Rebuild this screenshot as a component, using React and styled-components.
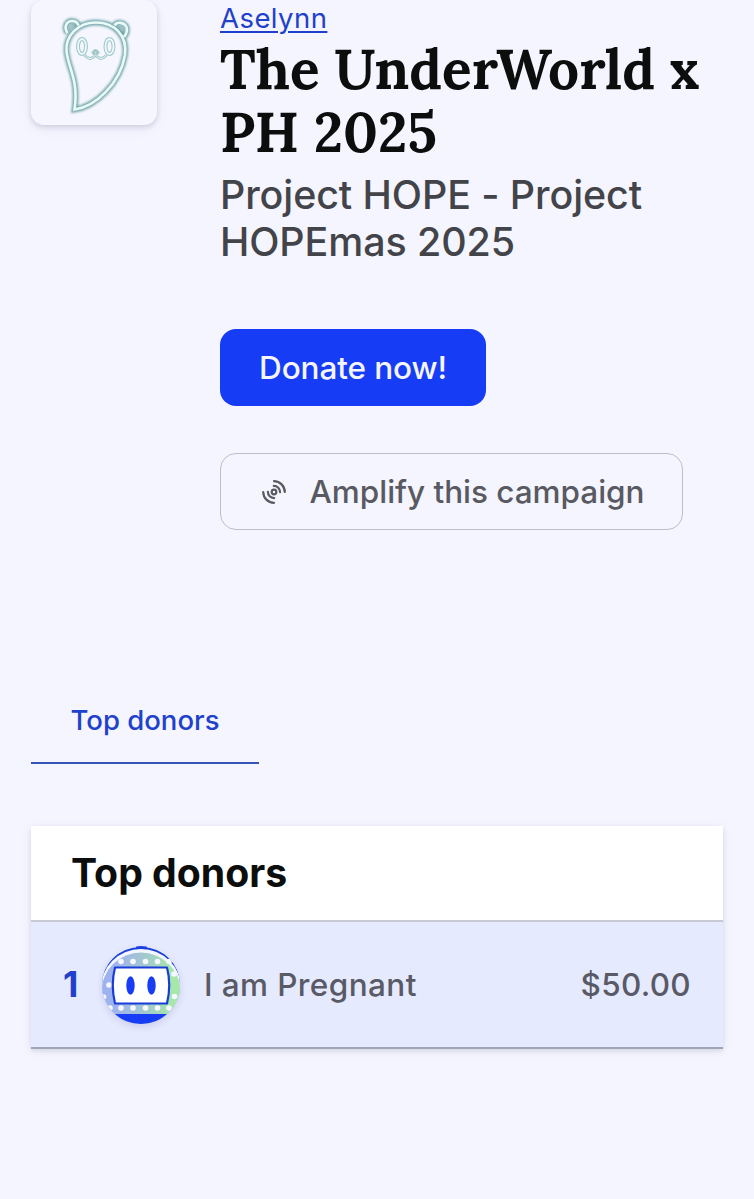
import React from "react";
import styled, { createGlobalStyle } from "styled-components";

const GlobalStyle = createGlobalStyle`
  * {
    box-sizing: border-box;
  }
  body {
    margin: 0;
    background-color: #f4f5ff;
    font-family: Inter, "Liberation Sans", sans-serif;
    -webkit-font-smoothing: antialiased;
  }
  h1, h2, p {
    margin: 0;
  }
`;

const StyledPage = styled.main`
  min-height: 1199px;
  padding: 0 31px;
  overflow: hidden;
`;

const StyledHero = styled.section`
  display: flex;
  align-items: flex-start;
  gap: 63px;
`;

const StyledAvatarCard = styled.div`
  flex: none;
  width: 126px;
  height: 125px;
  border-radius: 13px;
  background-color: #f5f6ff;
  box-shadow: 0 2px 5px rgba(40, 40, 70, 0.16), 0 4px 14px rgba(40, 40, 70, 0.05);
  svg {
    display: block;
  }
`;

const StyledDetails = styled.div`
  width: 503px;
`;

const StyledAuthor = styled.a`
  display: block;
  height: 38px;
  font-size: 27.5px;
  line-height: 37px;
  letter-spacing: 0.45px;
  color: #1f40cb;
  text-decoration: underline;
  text-decoration-thickness: 2px;
  text-underline-offset: 3px;
`;

const StyledTitle = styled.h1`
  font-family: Lora, "Liberation Serif", serif;
  font-size: 55px;
  line-height: 63px;
  font-weight: 700;
  color: #0c0d0d;
`;

const StyledSubtitle = styled.p`
  margin-top: 8px;
  font-size: 39.4px;
  font-weight: 500;
  line-height: 47.3px;
  letter-spacing: -0.08px;
  color: #434449;
`;

const StyledActions = styled.div`
  display: flex;
  flex-direction: column;
  align-items: flex-start;
  gap: 47px;
  margin-top: 62px;
`;

const StyledButton = styled.button`
  display: flex;
  align-items: center;
  justify-content: center;
  width: ${(props) => props.$width}px;
  height: 77px;
  padding: 0;
  border: ${(props) => (props.$outlined ? "1.5px solid #bdbec8" : "none")};
  border-radius: 16px;
  background-color: ${(props) => (props.$outlined ? "transparent" : "#163df5")};
  color: ${(props) => (props.$outlined ? "#595a61" : "#f4f5ff")};
  font-family: inherit;
  font-size: 31.5px;
  font-weight: 500;
  letter-spacing: ${(props) => props.$spacing}px;
  white-space: nowrap;
  svg {
    flex: none;
    margin: 1px 23px 0 2px;
  }
`;

const StyledTabs = styled.nav`
  display: flex;
  margin-top: 148px;
`;

const StyledTab = styled.a`
  width: 228px;
  height: 86px;
  border-bottom: 2px solid #3455b5;
  font-size: 27.5px;
  font-weight: 500;
  line-height: 84px;
  text-align: center;
  color: #2041cc;
`;

const StyledBoard = styled.section`
  margin-top: 62px;
  width: 692px;
  background-color: #ffffff;
  box-shadow: 0 2px 4px rgba(40, 40, 70, 0.1), 0 2px 12px rgba(40, 40, 70, 0.06);
`;

const StyledBoardTitle = styled.h2`
  height: 94px;
  padding-left: 40px;
  font-size: 39.2px;
  font-weight: 700;
  line-height: 94px;
  color: #0c0d0d;
`;

const StyledDonor = styled.div`
  display: flex;
  align-items: center;
  height: 129px;
  padding: 1px 32px 0;
  border-top: 2px solid #c6c8d2;
  border-bottom: 2px solid #9fa5b8;
  background-color: #e5eafe;
  font-size: 31.5px;
  font-weight: 500;
  color: #595a65;
`;

const StyledRank = styled.span`
  width: 39px;
  font-size: 35.5px;
  font-weight: 700;
  color: #2041cc;
`;

const StyledDonorAvatar = styled.div`
  flex: none;
  width: 78px;
  height: 78px;
  margin-right: 24px;
  border-radius: 50%;
  box-shadow: 0 3px 7px rgba(40, 50, 110, 0.14);
  svg {
    display: block;
  }
`;

const StyledDonorName = styled.span`
  flex: 1;
  letter-spacing: 0.4px;
`;

const StyledAmount = styled.span`
  letter-spacing: 0.3px;
`;

const ghostPaths = (
  <>
    <path d="M36.500 33C32.500 27 35.500 21 41 21Q46 21 47.500 25.500M83.500 25.500C86 21.500 93 22 95.500 27Q97 32 93 37" />
    <path d="M65 22.500C46.500 22.500 34.500 36 35.500 51C37 68 48 80 43.500 109.500C64 107 89 84 94 55C96.500 36 84 22.500 65 22.500Z" />
  </>
);

const GhostLogo = () => (
  <svg width="126" height="125" viewBox="0 0 126 125" fill="none">
    <defs>
      <filter id="glow" x="-20%" y="-20%" width="140%" height="140%">
        <feGaussianBlur stdDeviation="1.100" />
      </filter>
    </defs>
    <path d="M38 31Q37 24 42 24Q45 24 45 26ZM86 27Q92 24 93 30Q93 34 91 35Z" fill="#a9cbcd" />
    <g stroke="#669c9f" strokeWidth="6" opacity="0.850" filter="url(#glow)">
      {ghostPaths}
    </g>
    <g stroke="#e9fbf9" strokeWidth="2.600">
      {ghostPaths}
    </g>
    <g stroke="#a3c8cc" strokeWidth="4">
      <ellipse cx="51" cy="46.500" rx="4" ry="7.500" />
      <ellipse cx="78.500" cy="46.500" rx="4" ry="7.500" />
      <path d="M53.500 55Q59 62 64.500 55Q70 62 75.500 55M62 52.500Q64.500 48.500 67 52.500L64.500 55Z" strokeWidth="2.800" />
    </g>
    <g stroke="#ecfaf9" strokeWidth="1.800">
      <ellipse cx="51" cy="46.500" rx="4" ry="7.500" />
      <ellipse cx="78.500" cy="46.500" rx="4" ry="7.500" />
      <path d="M53.500 55Q59 62 64.500 55Q70 62 75.500 55" strokeWidth="1" />
    </g>
  </svg>
);

const AmplifyIcon = () => (
  <svg
    width="26"
    height="26"
    viewBox="0 0 26 26"
    fill="none"
    stroke="#595a61"
    strokeWidth="2.200"
    strokeLinecap="round"
  >
    <circle cx="13" cy="13" r="2.300" />
    <path d="M12.800 6.900A6.200 6.200 0 0 1 19.100 13.200" />
    <path d="M13 2.200A10.900 10.900 0 0 1 23.800 13" />
    <path d="M6.900 12.800A6.200 6.200 0 0 0 13.200 19.100" />
    <path d="M2.200 13A10.900 10.900 0 0 0 13 23.800" />
  </svg>
);

const dots = [
  [19, 15.5], [31, 15.5], [43.5, 15.5], [55.5, 15.5], [67, 15.5],
  [7, 39], [72, 28], [72.5, 50.5], [8, 62], [1.5, 51],
  [19, 62], [31, 62], [43.5, 62], [55.5, 62], [67, 62],
];

const RobotAvatar = () => (
  <svg width="78" height="78" viewBox="0 0 78 78">
    <defs>
      <linearGradient id="face" x1="0" x2="1">
        <stop offset="0.150" stopColor="#9fb2f0" />
        <stop offset="0.550" stopColor="#a3c8cf" />
        <stop offset="0.900" stopColor="#a6e8a8" />
      </linearGradient>
      <clipPath id="round">
        <circle cx="39" cy="39" r="39" />
      </clipPath>
    </defs>
    <g clipPath="url(#round)">
      <rect width="78" height="78" fill="#e9edff" />
      <circle cx="39" cy="42" r="41" fill="#1a3fdc" />
      <circle cx="39" cy="43.500" r="40.500" fill="#f4f6ff" />
      <circle cx="39" cy="46" r="39.500" fill="url(#face)" />
      <rect x="34" y="0" width="11" height="3" rx="1" fill="#1a3fdc" />
      {dots.map(([cx, cy]) => (
        <circle key={`${cx}-${cy}`} cx={cx} cy={cy} r="2.800" fill="#f6f8ff" />
      ))}
      <path
        d="M13 21.500H65Q69.500 39 65 57.500H13Q8.500 39 13 21.500Z"
        fill="#ffffff"
        stroke="#183cd8"
        strokeWidth="2.200"
        strokeLinejoin="round"
      />
      <ellipse cx="28.500" cy="39.500" rx="4.200" ry="9.200" fill="#163df5" />
      <ellipse cx="49.500" cy="39.500" rx="4.200" ry="9.200" fill="#163df5" />
      <path d="M10 68H68L64 78H14Z" fill="#163df5" />
    </g>
  </svg>
);

const donors = [{ name: "I am Pregnant", amount: "$50.00" }];

const App = () => {
  return (
    <StyledPage>
      <GlobalStyle />
      <StyledHero>
        <StyledAvatarCard>
          <GhostLogo />
        </StyledAvatarCard>
        <StyledDetails>
          <StyledAuthor>Aselynn</StyledAuthor>
          <StyledTitle>
            The UnderWorld x
            <br />
            PH 2025
          </StyledTitle>
          <StyledSubtitle>
            Project HOPE - Project
            <br />
            HOPEmas 2025
          </StyledSubtitle>
          <StyledActions>
            <StyledButton $width={266} $spacing={-0.1}>
              Donate now!
            </StyledButton>
            <StyledButton $width={463} $spacing={-0.03} $outlined>
              <AmplifyIcon />
              Amplify this campaign
            </StyledButton>
          </StyledActions>
        </StyledDetails>
      </StyledHero>
      <StyledTabs>
        <StyledTab>Top donors</StyledTab>
      </StyledTabs>
      <StyledBoard>
        <StyledBoardTitle>Top donors</StyledBoardTitle>
        {donors.map((donor, index) => (
          <StyledDonor key={donor.name}>
            <StyledRank>{index + 1}</StyledRank>
            <StyledDonorAvatar>
              <RobotAvatar />
            </StyledDonorAvatar>
            <StyledDonorName>{donor.name}</StyledDonorName>
            <StyledAmount>{donor.amount}</StyledAmount>
          </StyledDonor>
        ))}
      </StyledBoard>
    </StyledPage>
  );
};

export default App;
